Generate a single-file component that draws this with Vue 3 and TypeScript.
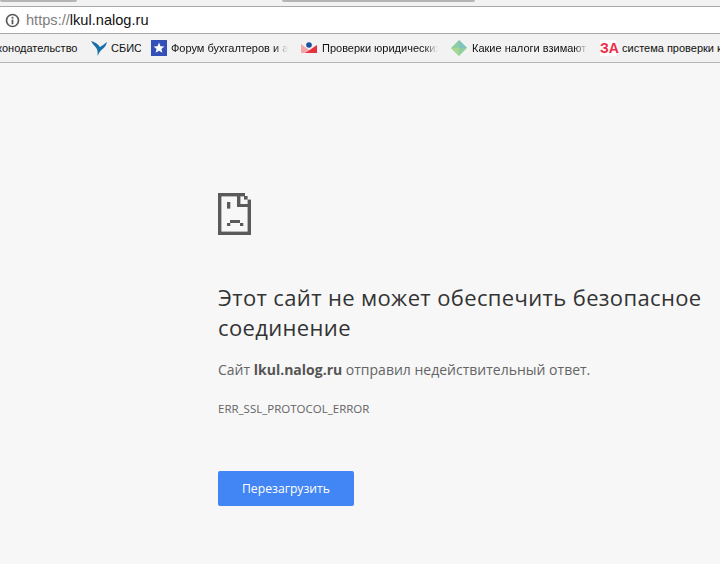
<script setup lang="ts">
interface Bookmark {
  label: string
  kind: 'none' | 'sbis' | 'star' | 'check' | 'gem' | 'za'
  fade?: boolean
  width: number
}
const bookmarks: Bookmark[] = [
  { label: 'конодательство', kind: 'none', width: 81 },
  { label: 'СБИС', kind: 'sbis', width: 30 },
  { label: 'Форум бухгалтеров и а', kind: 'star', fade: true, width: 117 },
  { label: 'Проверки юридических', kind: 'check', fade: true, width: 116 },
  { label: 'Какие налоги взимают с', kind: 'gem', fade: true, width: 116 },
  { label: 'система проверки контрагентов', kind: 'za', width: 110 },
]
</script>

<template>
  <div class="screen">
    <div class="tabs">
      <div class="tab tab-left"></div>
      <div class="tab tab-right"></div>
    </div>
    <div class="address">
      <svg class="info" width="15" height="15" viewBox="0 0 15 15">
        <circle cx="7.5" cy="7.5" r="6" fill="none" stroke="#5a5a5a" stroke-width="1.7" />
        <rect x="6.6" y="6.6" width="1.8" height="4.6" fill="#5a5a5a" />
        <rect x="6.6" y="3.8" width="1.8" height="1.8" fill="#5a5a5a" />
      </svg>
      <span class="url"><span class="scheme">https://</span>lkul.nalog.ru</span>
    </div>
    <div class="bookmarks">
      <div v-for="b in bookmarks" :key="b.label" class="bookmark" :class="'bm-' + b.kind">
        <svg v-if="b.kind === 'sbis'" class="bm-icon" width="16" height="16" viewBox="0 0 16 16">
          <path d="M0 1 C4 2 7 4 9 7 C11 6 13 4 16 2 C15 6 13 8 11 9.5 C9 11 8 13 6.5 16 C7 12 6.5 9 4.5 7 C2.5 5 1 3 0 1 Z" fill="#1b6fa8" />
        </svg>
        <svg v-else-if="b.kind === 'star'" class="bm-icon" width="16" height="16" viewBox="0 0 16 16">
          <rect width="16" height="16" fill="#3450b8" />
          <path d="M8 2.6 L9.5 6.3 L13.4 6.5 L10.4 9 L11.4 12.8 L8 10.7 L4.6 12.8 L5.6 9 L2.6 6.5 L6.5 6.3 Z" fill="#fff" />
        </svg>
        <svg v-else-if="b.kind === 'check'" class="bm-icon" width="16" height="16" viewBox="0 0 16 16">
          <path d="M0 4 L8 10 L16 5 V13 H0 Z" fill="#f4a6aa" />
          <path d="M9 10 L16 5 V13 H4 Z" fill="#e8313f" />
          <circle cx="8" cy="5" r="2.8" fill="#1d4f9c" />
        </svg>
        <svg v-else-if="b.kind === 'gem'" class="bm-icon" width="16" height="16" viewBox="0 0 16 16">
          <path d="M8 0 L16 8 L8 16 L0 8 Z" fill="#8fcf9f" />
          <path d="M8 0 L16 8 L8 8 Z" fill="#7fc4c0" />
          <path d="M0 8 L8 16 L8 8 Z" fill="#a8d890" />
        </svg>
        <span v-else-if="b.kind === 'za'" class="za">ЗА</span>
        <span class="bm-label" :class="{ fade: b.fade }" :style="{ width: b.width + 'px' }">{{ b.label }}</span>
      </div>
    </div>
    <main class="page">
      <svg class="sad" width="33" height="42" viewBox="0 0 33 42">
        <g fill="#5a5a5a">
          <rect x="0" y="0" width="3.4" height="42" />
          <rect x="0" y="0" width="27" height="3.4" />
          <rect x="0" y="38.6" width="33" height="3.4" />
          <rect x="29.6" y="6.6" width="3.4" height="35.4" />
          <rect x="19" y="0" width="3.4" height="14" />
          <rect x="26" y="3" width="3.6" height="3.6" />
          <rect x="19" y="11" width="14" height="3" />
          <rect x="9" y="9" width="3.3" height="6.6" />
          <rect x="12" y="27" width="10" height="3" />
          <rect x="9" y="30" width="3.3" height="3" />
          <rect x="22" y="30" width="3.3" height="3" />
        </g>
      </svg>
      <h1 class="title">Этот сайт не может обеспечить безопасное соединение</h1>
      <p class="message">Сайт <strong>lkul.nalog.ru</strong> отправил недействительный ответ.</p>
      <div class="code">ERR_SSL_PROTOCOL_ERROR</div>
      <button class="reload" type="button">Перезагрузить</button>
    </main>
  </div>
</template>

<style>
html, body { margin: 0; background: #f7f7f7; }
</style>

<style scoped>
.screen {
  width: 720px;
  height: 564px;
  overflow: hidden;
  background: #f7f7f7;
  font-family: "Open Sans", "Noto Sans", sans-serif;
  display: flex;
  flex-direction: column;
}
.tabs {
  height: 6px;
  background: #f2f2f2;
  border-bottom: 1px solid #a9a9a9;
  display: flex;
  gap: 205px;
}
.tab { height: 2px; background: #b5b5b5; border-radius: 0 0 2px 2px; }
.tab-left { width: 77px; }
.tab-right { width: 193px; }
.address {
  height: 26px;
  background: #fff;
  border-bottom: 1px solid #a9a9a9;
  display: flex;
  align-items: center;
  padding-left: 5px;
  gap: 6px;
}
.url {
  font-size: 14.6px;
  color: #111;
  font-family: "Liberation Sans", Arial, sans-serif;
}
.scheme { color: #7d7d7d; }
.bookmarks {
  height: 28px;
  background: #f2f2f2;
  border-bottom: 1px solid #b5b5b5;
  display: flex;
  align-items: center;
  white-space: nowrap;
  overflow: hidden;
  font-family: "Liberation Sans", Arial, sans-serif;
  font-size: 11px;
  color: #111;
}
.bookmark { display: flex; align-items: center; gap: 4px; flex: none; margin-right: 12px; }
.bm-none { margin-left: -3px; margin-right: 13px; }
.bm-sbis { margin-right: 10px; }
.bm-star { margin-right: 13px; }
.bm-check { gap: 5px; margin-right: 13px; }
.bm-gem { gap: 5px; }
.bm-za { gap: 6px; }
.bm-icon { flex: none; }
.bm-label { overflow: hidden; display: block; }
.fade { -webkit-mask-image: linear-gradient(to right, #000 88%, transparent); mask-image: linear-gradient(to right, #000 88%, transparent); }
.za {
  width: 16px;
  height: 16px;
  background: #fff;
  color: #ee2b47;
  font: bold 14px/16px "Liberation Sans", sans-serif;
  text-align: center;
}
.page {
  flex: 1;
  padding: 130px 0 0 218px;
  display: flex;
  flex-direction: column;
  align-items: flex-start;
}
.sad { display: block; }
.title {
  margin: 47px 0 0;
  width: 495px;
  font-size: 22px;
  letter-spacing: 0.36px;
  line-height: 30px;
  font-weight: 400;
  color: #333;
}
.message {
  margin: 17px 0 0;
  font-size: 14px;
  line-height: 22px;
  color: #646464;
  white-space: nowrap;
}
.message strong { font-weight: 700; color: #555; }
.code {
  margin-top: 20px;
  font-size: 11.5px;
  line-height: 16px;
  color: #646464;
}
.reload {
  margin-top: 54px;
  width: 136px;
  height: 35px;
  border: 0;
  border-radius: 2px;
  background: #4285f4;
  color: #fff;
  font: 12.2px "Open Sans", sans-serif;
  padding: 0;
}
</style>
